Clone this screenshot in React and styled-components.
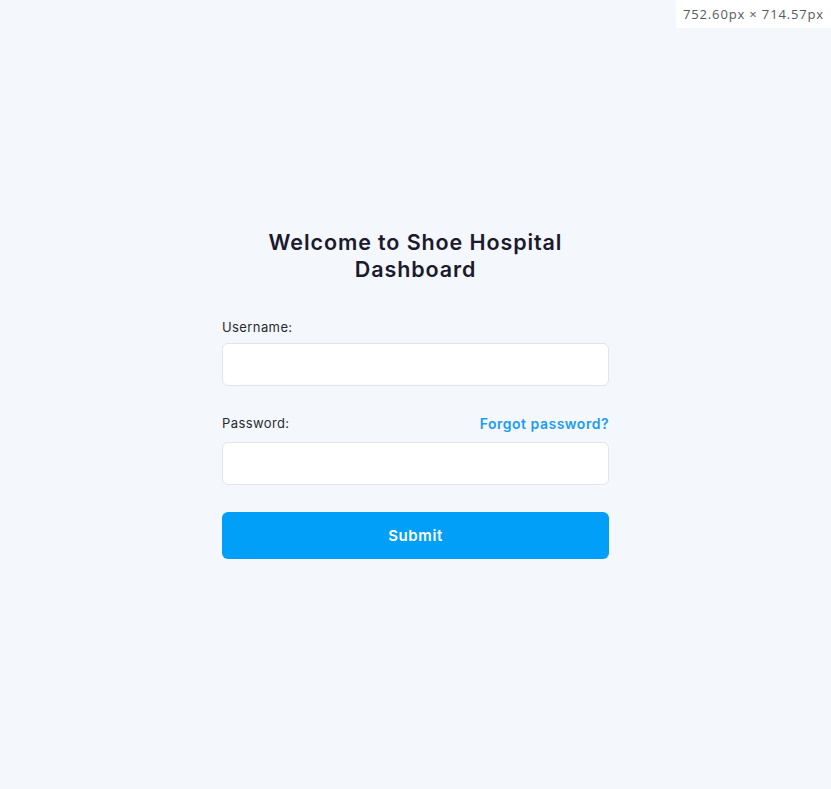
import React from "react"
import styled, { createGlobalStyle } from "styled-components"

const GlobalStyle = createGlobalStyle`
  html, body {
    margin: 0;
    padding: 0;
    background: #f4f7fb;
    font-family: Inter, "Open Sans", sans-serif;
  }
`

const App = () => (
  <>
    <GlobalStyle />
    <Page>
      <SizeBadge>752.60px × 714.57px</SizeBadge>
      <Form onSubmit={e => e.preventDefault()}>
        <Title>Welcome to Shoe Hospital Dashboard</Title>
        <Field $space={28}>
          <LabelRow>
            <Label htmlFor="username">Username:</Label>
          </LabelRow>
          <Input id="username" type="text" />
        </Field>
        <Field>
          <LabelRow $gap={10}>
            <Label htmlFor="password">Password:</Label>
            <ForgotLink href="#">Forgot password?</ForgotLink>
          </LabelRow>
          <Input id="password" type="password" />
        </Field>
        <SubmitButton type="submit">Submit</SubmitButton>
      </Form>
    </Page>
  </>
)

const Page = styled.div`
  position: relative;
  min-height: 789px;
  display: flex;
  align-items: center;
  justify-content: center;
`

const SizeBadge = styled.div`
  position: absolute;
  top: 0;
  right: 0;
  background: #ffffff;
  color: #555a60;
  font-family: "Open Sans", sans-serif;
  font-size: 13px;
  letter-spacing: 0.85px;
  padding: 6px 7px 5px 7px;
  line-height: 17px;
`

const Form = styled.form`
  width: 387px;
  display: flex;
  flex-direction: column;
  margin-top: -1px;
`

const Title = styled.h1`
  margin: 0 10px 35px;
  text-align: center;
  font-size: 21.5px;
  line-height: 27px;
  font-weight: 600;
  color: #1b1a2e;
  letter-spacing: 0.9px;
`

const Field = styled.div`
  display: flex;
  flex-direction: column;
  margin-bottom: ${p => p.$space ?? 27}px;
`

const LabelRow = styled.div`
  display: flex;
  justify-content: space-between;
  align-items: center;
  margin-bottom: ${p => p.$gap ?? 7}px;
`

const Label = styled.label`
  font-size: 13px;
  line-height: 18px;
  letter-spacing: 0.4px;
  color: #2a2a33;
`

const ForgotLink = styled.a`
  font-size: 14px;
  font-weight: 600;
  letter-spacing: 0.5px;
  color: #1c9bf3;
  text-decoration: none;
`

const Input = styled.input`
  height: 43px;
  box-sizing: border-box;
  border: 1px solid #e1e4ec;
  border-radius: 6px;
  background: #ffffff;
  padding: 0 12px;
  font-size: 14px;
  outline: none;
`

const SubmitButton = styled.button`
  height: 47px;
  border: none;
  border-radius: 6px;
  background: #029ff9;
  color: #ffffff;
  font-family: Inter, sans-serif;
  font-size: 15px;
  font-weight: 600;
  letter-spacing: 0.6px;
  cursor: pointer;
`

export default App
